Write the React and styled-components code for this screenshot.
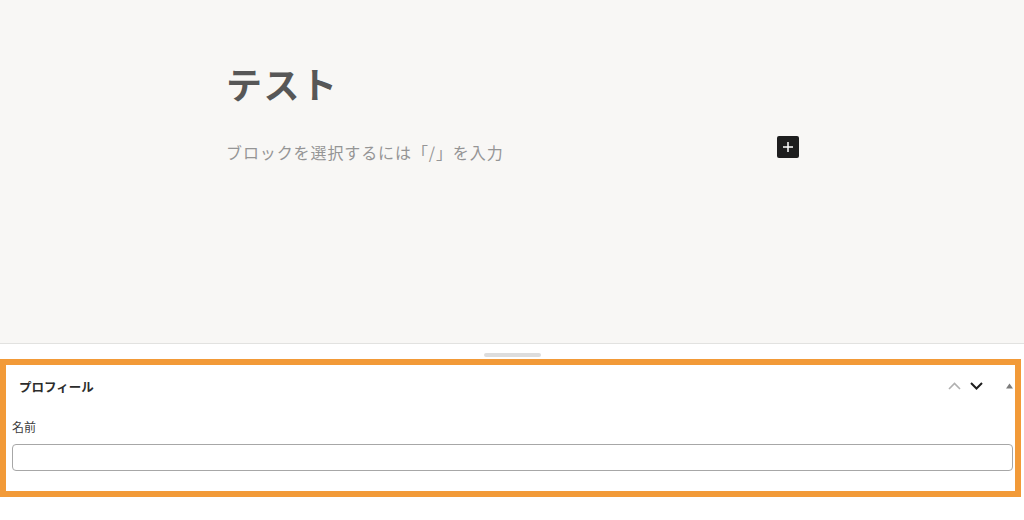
import React from "react";
import styled, { createGlobalStyle } from "styled-components";

const Global = createGlobalStyle`
  html, body { margin: 0; padding: 0; background: #ffffff; }
  body { font-family: "Noto Sans CJK JP", "Noto Sans", sans-serif; }
  * { box-sizing: border-box; }
`;

const Page = styled.div`
  width: 1024px;
  height: 520px;
  display: flex;
  flex-direction: column;
  background: #ffffff;
  overflow: hidden;
`;

const Editor = styled.div`
  height: 344px;
  flex: none;
  background: #f8f7f5;
  border-bottom: 1px solid #e2e2e0;
`;

const Column = styled.div`
  width: 574px;
  margin: 0 auto;
  padding: 62px 0 0 1px;
  display: flex;
  flex-direction: column;
`;

const Title = styled.h1`
  margin: 0;
  font-size: 36px;
  line-height: 43px;
  font-weight: 700;
  color: #575757;
  letter-spacing: 1.5px;
`;

const BlockRow = styled.div`
  margin-top: 30px;
  display: flex;
  align-items: flex-start;
  justify-content: space-between;
`;

const Placeholder = styled.p`
  margin: 0;
  font-size: 16px;
  line-height: 34px;
  color: #959595;
  letter-spacing: 0.9px;
`;

const Inserter = styled.button`
  width: 22px;
  height: 22px;
  margin-top: 1px;
  padding: 0;
  border: none;
  border-radius: 2px;
  background: #1e1e1e;
  display: flex;
  align-items: center;
  justify-content: center;
`;

const ResizeBar = styled.div`
  height: 15px;
  flex: none;
  display: flex;
  justify-content: center;
  padding-top: 9px;
`;

const Handle = styled.div`
  width: 57px;
  height: 4px;
  border-radius: 2px;
  background: #dddddd;
`;

const MetaBox = styled.section`
  width: 1021px;
  height: 138px;
  border: 6px solid #f29a38;
  background: #ffffff;
  display: flex;
  flex-direction: column;
`;

const BoxHeader = styled.div`
  height: 42px;
  display: flex;
  align-items: center;
  padding-left: 13px;
`;

const BoxTitle = styled.h2`
  margin: 0;
  flex: 1;
  font-size: 12.5px;
  font-weight: 700;
  color: #2c2c2c;
`;

const IconButton = styled.button`
  width: ${(p) => p.$w || 22}px;
  height: 22px;
  margin-left: ${(p) => p.$ml || 0}px;
  padding: 0;
  border: none;
  background: transparent;
  display: flex;
  align-items: center;
  justify-content: center;
`;

const BoxBody = styled.div`
  display: flex;
  flex-direction: column;
  padding: 11px 2px 20px 6px;
`;

const Label = styled.label`
  font-size: 12px;
  line-height: 18px;
  color: #3c3c3c;
  margin-bottom: 8px;
`;

const TextInput = styled.input`
  width: 100%;
  height: 27px;
  border: 1px solid #a7a7a7;
  border-radius: 4px;
  background: #ffffff;
  outline: none;
`;

export default function App() {
  return (
    <Page>
      <Global />
      <Editor>
        <Column>
          <Title>テスト</Title>
          <BlockRow>
            <Placeholder>ブロックを選択するには「/」を入力</Placeholder>
            <Inserter aria-label="ブロックを追加">
              <svg width="12" height="12" viewBox="0 0 12 12">
                <path d="M6 1v10M1 6h10" stroke="#ffffff" strokeWidth="1.5" />
              </svg>
            </Inserter>
          </BlockRow>
        </Column>
      </Editor>
      <ResizeBar>
        <Handle />
      </ResizeBar>
      <MetaBox>
        <BoxHeader>
          <BoxTitle>プロフィール</BoxTitle>
          <IconButton aria-label="上へ移動">
            <svg width="13" height="8" viewBox="0 0 13 8">
              <polyline points="1,7 6.5,1.5 12,7" fill="none" stroke="#b0b0b0" strokeWidth="1.6" />
            </svg>
          </IconButton>
          <IconButton aria-label="下へ移動">
            <svg width="13" height="8" viewBox="0 0 13 8">
              <polyline points="1,1 6.5,6.5 12,1" fill="none" stroke="#1e1e1e" strokeWidth="2" />
            </svg>
          </IconButton>
          <IconButton $w={12} $ml={16} aria-label="パネルを切り替え">
            <svg width="7" height="6" viewBox="0 0 7 6">
              <polygon points="0,5.5 3.5,0.5 7,5.5" fill="#7c7c7c" />
            </svg>
          </IconButton>
        </BoxHeader>
        <BoxBody>
          <Label>名前</Label>
          <TextInput type="text" />
        </BoxBody>
      </MetaBox>
    </Page>
  );
}
